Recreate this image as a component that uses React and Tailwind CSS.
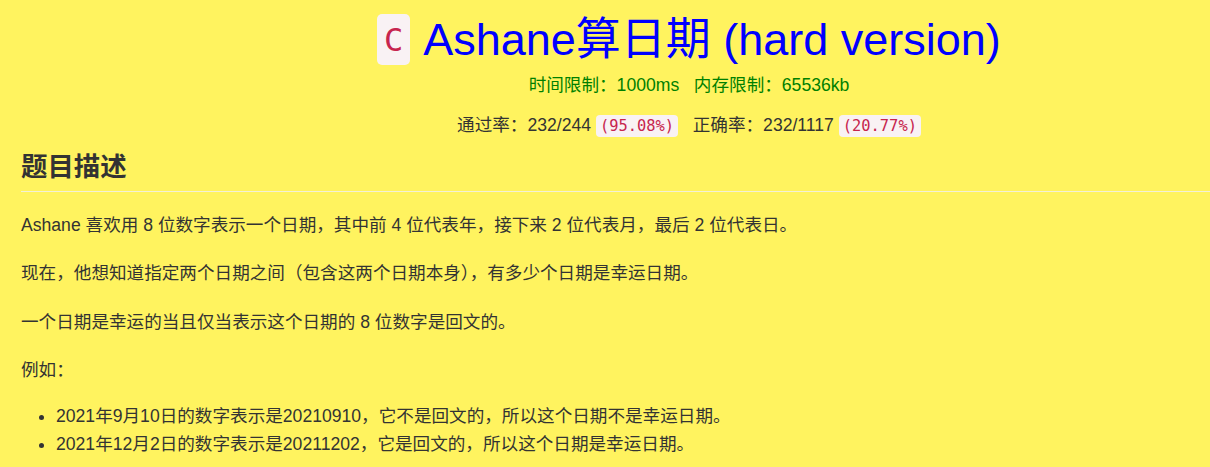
import React from 'react'

function Code({ children }) {
  return (
    <code className="bg-[#f9f2f4] text-[#c7254e] rounded-[4px] px-[4px] py-[2px] text-[15.4px] font-['DejaVu_Sans_Mono',monospace]">
      {children}
    </code>
  )
}

export default function App() {
  return (
    <div className="w-[1210px] h-[467px] overflow-hidden bg-[#fff35f] text-[#333] font-['Liberation_Sans','Noto_Sans_CJK_SC',sans-serif]">
      <div className="pl-[168px] text-center">
        <h1 className="pt-[14px] flex justify-center items-center gap-[13px]">
          <span className="bg-[#f9f2f4] text-[#c7254e] rounded-[5px] w-[33px] h-[51px] flex items-center justify-center text-[32px] font-['DejaVu_Sans_Mono',monospace]">C</span>
          <span className="text-[45px] text-[#0000ff] leading-none">Ashane算日期 (hard version)</span>
        </h1>
        <div className="mt-[8px] text-[17.6px] text-[#008000] leading-[25px]">
          时间限制：1000ms&nbsp;&nbsp;&nbsp;内存限制：65536kb
        </div>
        <div className="mt-[15px] text-[17.6px] leading-[25px]">
          通过率：232/244 <Code>(95.08%)</Code>&nbsp;&nbsp;&nbsp;正确率：232/1117 <Code>(20.77%)</Code>
        </div>
      </div>
      <div className="pl-[21px]">
        <h2 className="mt-[10px] text-[26.4px] font-bold leading-[36px] pb-[6px] border-b border-[#f3f0d8]">题目描述</h2>
        <div className="text-[17.6px] leading-[25px]">
          <p className="mt-[21px]">Ashane 喜欢用 8 位数字表示一个日期，其中前 4 位代表年，接下来 2 位代表月，最后 2 位代表日。</p>
          <p className="mt-[23px]">现在，他想知道指定两个日期之间（包含这两个日期本身），有多少个日期是幸运日期。</p>
          <p className="mt-[24px]">一个日期是幸运的当且仅当表示这个日期的 8 位数字是回文的。</p>
          <p className="mt-[23px]">例如：</p>
          <ul className="mt-[19px] pl-[35px] list-disc leading-[28px]">
            <li>2021年9月10日的数字表示是20210910，它不是回文的，所以这个日期不是幸运日期。</li>
            <li>2021年12月2日的数字表示是20211202，它是回文的，所以这个日期是幸运日期。</li>
          </ul>
        </div>
      </div>
    </div>
  )
}
